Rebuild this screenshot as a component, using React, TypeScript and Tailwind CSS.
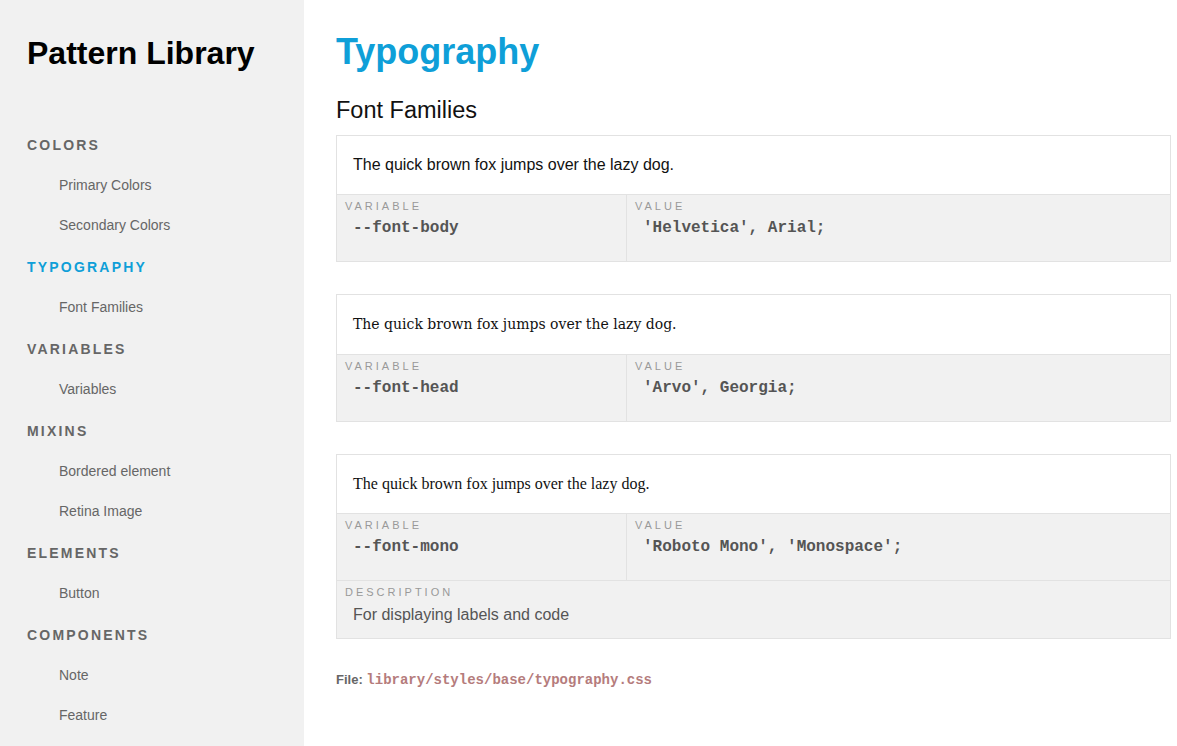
const nav = [
  { title: "Colors", links: ["Primary Colors", "Secondary Colors"] },
  { title: "Typography", links: ["Font Families"], active: true },
  { title: "Variables", links: ["Variables"] },
  { title: "Mixins", links: ["Bordered element", "Retina Image"] },
  { title: "Elements", links: ["Button"] },
  { title: "Components", links: ["Note", "Feature"] },
];

const fonts = [
  {
    sampleClass: "h-[58px] font-['Liberation_Sans',Arial,sans-serif] text-[16px] text-[#111]",
    variable: "--font-body",
    value: "'Helvetica', Arial;",
  },
  {
    sampleClass: "h-[59px] font-['DejaVu_Serif',Georgia,serif] text-[14px] text-[#111]",
    variable: "--font-head",
    value: "'Arvo', Georgia;",
  },
  {
    sampleClass: "h-[58px] font-['Liberation_Serif','Times_New_Roman',serif] text-[16px] text-[#111]",
    variable: "--font-mono",
    value: "'Roboto Mono', 'Monospace';",
    description: "For displaying labels and code",
  },
];

function Label({ children }: { children: React.ReactNode }) {
  return (
    <p className="text-[11px] leading-[13px] uppercase tracking-[3px] text-[#999]">{children}</p>
  );
}

function FontCard({ f }: { f: (typeof fonts)[number] }) {
  return (
    <div className="border border-[#e2e2e2] mb-[32px]">
      <div className={`flex items-center px-4 bg-white ${f.sampleClass}`}>
        The quick brown fox jumps over the lazy dog.
      </div>
      <div className="grid grid-cols-[290px_1fr] bg-[#f1f1f1] border-t border-[#e2e2e2]">
        <div className="px-2 pt-[5px] pb-[24px] border-r border-[#e2e2e2]">
          <Label>Variable</Label>
          <p className="mt-[6px] pl-2 font-['Liberation_Mono',monospace] font-bold text-[16px] leading-[18px] text-[#555]">
            {f.variable}
          </p>
        </div>
        <div className="px-2 pt-[5px] pb-[24px]">
          <Label>Value</Label>
          <p className="mt-[6px] pl-2 font-['Liberation_Mono',monospace] font-bold text-[16px] leading-[18px] text-[#555]">
            {f.value}
          </p>
        </div>
      </div>
      {f.description && (
        <div className="bg-[#f1f1f1] border-t border-[#e2e2e2] px-2 pt-[5px] pb-[13px]">
          <Label>Description</Label>
          <p className="mt-[6px] pl-2 text-[16px] leading-[20px] text-[#555]">{f.description}</p>
        </div>
      )}
    </div>
  );
}

export default function App() {
  return (
    <div className="flex min-h-screen font-['Liberation_Sans',Arial,sans-serif] bg-white">
      <aside className="w-[304px] shrink-0 bg-[#f1f1f1] pl-[27px] pt-[33px] pb-8">
        <h1 className="text-[32px] leading-[40px] font-bold text-black">Pattern Library</h1>
        <nav className="mt-[52px]">
          {nav.map((g, i) => (
            <div key={g.title} className={i === 0 ? "" : "mt-[2px]"}>
              <div
                className={`h-[40px] flex items-center text-[14px] font-bold uppercase tracking-[2.2px] ${
                  g.active ? "text-[#0f9fd8]" : "text-[#666]"
                }`}
              >
                {g.title}
              </div>
              {g.links.map((l) => (
                <div key={l} className="h-[40px] flex items-center pl-8 text-[14px] text-[#666]">
                  {l}
                </div>
              ))}
            </div>
          ))}
        </nav>
      </aside>

      <main className="flex-1 pl-8 pr-[6px] pt-8 pb-10">
        <h1 className="text-[36px] leading-[40px] font-bold text-[#0f9fd8]">Typography</h1>
        <h2 className="mt-[23px] mb-[10px] text-[23.5px] leading-[30px] text-[#111]">Font Families</h2>
        {fonts.map((f) => (
          <FontCard key={f.variable} f={f} />
        ))}
        <p className="mt-[10px] text-[13px] leading-[18px]">
          <span className="font-bold text-[#666]">File:</span>{" "}
          <code className="font-['Liberation_Mono',monospace] font-bold text-[14px] text-[#b57c7c]">
            library/styles/base/typography.css
          </code>
        </p>
      </main>
    </div>
  );
}
